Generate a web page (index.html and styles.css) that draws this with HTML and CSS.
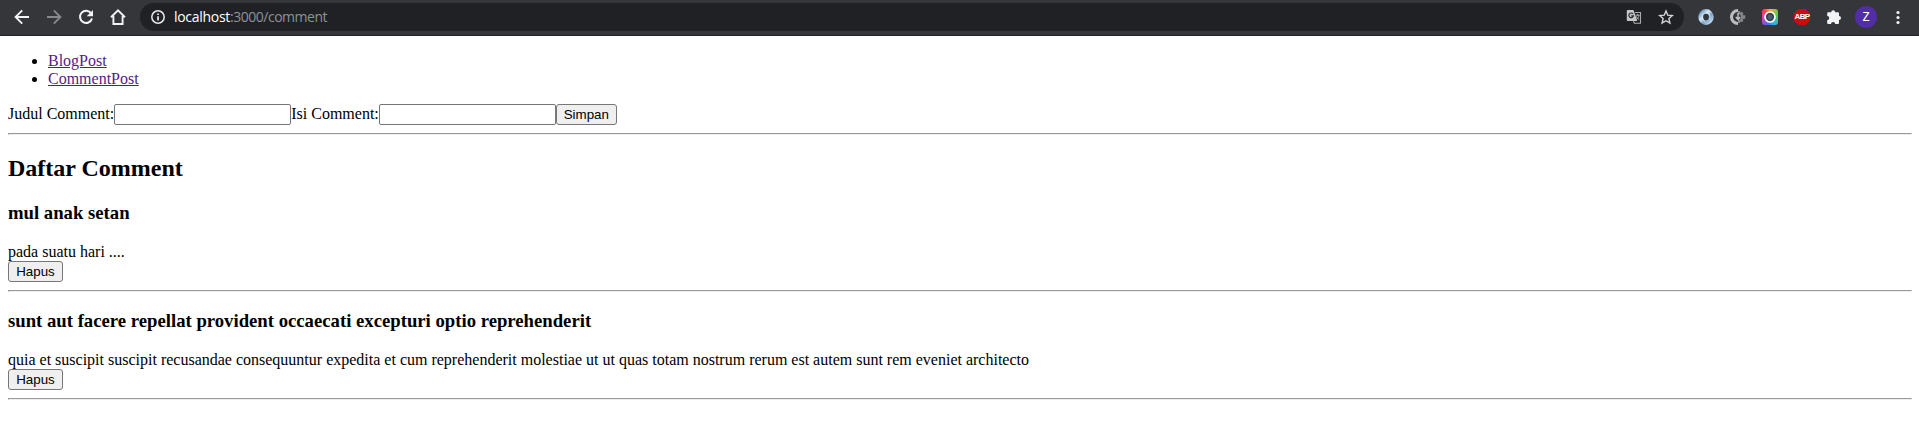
FILE: index.html
```html
<!DOCTYPE html>
<html lang="id">
<head>
<meta charset="utf-8">
<title>Comment</title>
<link rel="stylesheet" href="styles.css">
</head>
<body>
<header class="toolbar">
  <svg class="icon" viewBox="0 0 16 16"><path d="M15 8H2M8.2 1.3 1.6 8l6.6 6.7" fill="none" stroke="#f1f3f4" stroke-width="1.9"/></svg>
  <svg class="icon" viewBox="0 0 16 16"><path d="M1 8h13M7.8 1.3 14.4 8l-6.6 6.7" fill="none" stroke="#87898c" stroke-width="1.9"/></svg>
  <svg class="icon" viewBox="0 0 16 16"><path d="M13.2 4.4A6.1 6.1 0 1 0 14 9.5" fill="none" stroke="#f1f3f4" stroke-width="2"/><path d="M15 1v6.3H8.7z" fill="#f1f3f4"/></svg>
  <svg class="icon" viewBox="0 0 16 16"><path d="M1 8.3 8 1.4l7 6.9M3.4 7v8h9.2V7" fill="none" stroke="#f1f3f4" stroke-width="1.9"/></svg>
  <div class="omnibox">
    <svg class="info" viewBox="0 0 14 14"><circle cx="7" cy="7" r="6.2" fill="none" stroke="#e8eaed" stroke-width="1.5"/><path d="M6.2 6.2h1.7v4.4H6.2zM6.2 3.4h1.7V5H6.2z" fill="#e8eaed"/></svg>
    <span class="url"><span class="host">localhost</span><span class="path">:3000/comment</span></span>
    <svg class="icon" viewBox="0 0 16 16"><path d="M1.5 1h6l3.8 11H1.5a.7.7 0 0 1-.7-.7V1.7c0-.4.3-.7.7-.7z" fill="#c5c6c8"/><path d="M9 3.5h5.500v10.800H8.300L7.600 12" fill="none" stroke="#a8aaac" stroke-width="1.1"/><path d="M7 4.900a2.300 2.300 0 1 0 .4 2H5.200" fill="none" stroke="#292a2d" stroke-width="1.2"/><path d="M9.600 6.200h4M11.500 5v1.200M13 6.300c-.4 2-1.400 3.400-2.800 4.300M10.200 7.300c.6 1.400 1.500 2.500 3 3.300" fill="none" stroke="#c0c1c3" stroke-width=".9"/></svg>
    <svg class="icon" viewBox="0 0 16 16"><path d="m8 2 1.800 4.200 4.500.4-3.400 3 1 4.400L8 11.700 4.100 14l1-4.400-3.400-3 4.500-.4z" fill="none" stroke="#d6d7d9" stroke-width="1.4"/></svg>
  </div>
  <svg class="icon" viewBox="0 0 16 16"><defs><linearGradient id="ring" x1="0" y1="0" x2="1" y2="1"><stop offset="0" stop-color="#6795bd"/><stop offset=".35" stop-color="#d4e5f4"/><stop offset=".65" stop-color="#78a5cc"/><stop offset="1" stop-color="#c4daee"/></linearGradient></defs><ellipse cx="8" cy="8" rx="5.300" ry="5.600" fill="none" stroke="url(#ring)" stroke-width="4.800"/><path d="M5 4C3.500 7 4.500 11 7.500 13.500M8.500 2.400c3 2 4.300 5 3 8.600" fill="none" stroke="#dfedf8" stroke-width=".8"/></svg>
  <svg class="icon" viewBox="0 0 16 16"><path d="M8 0a8 8 0 0 0 0 16v-3a5 5 0 0 1 0-10z" fill="#bcbdbf"/><path d="M8 2h2l.4 1.700 1.400-1 1.700 1.700-1 1.500 2.800.6v3l-2.800.5 1 1.500-1.700 1.700-1.400-1L10 14H8v-3a3 3 0 0 0 0-6z" fill="#85878a"/><path d="M8 4v6M5.800 8 8 10.500 10.200 8" fill="none" stroke="#c5c6c8" stroke-width="1.400"/></svg>
  <span class="icon camera"><svg viewBox="0 0 16 16"><circle cx="8" cy="8" r="5" fill="#34434d" stroke="#fff" stroke-width="1.700"/><circle cx="8" cy="8" r="2.500" fill="#465e70"/></svg></span>
  <span class="icon adblock">ABP</span>
  <svg class="icon" viewBox="0 0 16 16"><path d="M5.200 3.200a2 2 0 0 1 4 0H12a1 1 0 0 1 1 1v2.900a2 2 0 0 1 0 4V14a1 1 0 0 1-1 1H9.200a2.100 2.100 0 0 0-4.200 0H2.200a1 1 0 0 1-1-1v-2.800a2.100 2.100 0 0 0 0-4.200V4.200a1 1 0 0 1 1-1z" fill="#f1f3f4"/></svg>
  <span class="avatar">Z</span>
  <svg class="icon" viewBox="0 0 16 16"><g fill="#f1f3f4"><circle cx="8" cy="3.500" r="1.600"/><circle cx="8" cy="8.500" r="1.600"/><circle cx="8" cy="13.500" r="1.600"/></g></svg>
</header>
<main class="page">
  <ul class="nav">
    <li><a href="#blog">BlogPost</a></li>
    <li><a href="#comment">CommentPost</a></li>
  </ul>
  <form class="entry">
    <label for="judul">Judul Comment:</label><input class="field" id="judul" type="text"><label for="isi">Isi Comment:</label><input class="field" id="isi" type="text"><button class="btn save" type="button">Simpan</button>
  </form>
  <hr>
  <h2>Daftar Comment</h2>
  <article>
    <h3>mul anak setan</h3>
    <div>pada suatu hari ....</div>
    <button class="btn remove" type="button">Hapus</button>
  </article>
  <hr>
  <article>
    <h3>sunt aut facere repellat provident occaecati excepturi optio reprehenderit</h3>
    <div>quia et suscipit suscipit recusandae consequuntur expedita et cum reprehenderit molestiae ut ut quas totam nostrum rerum est autem sunt rem eveniet architecto</div>
    <button class="btn remove" type="button">Hapus</button>
  </article>
  <hr>
</main>
</body>
</html>
```
FILE: styles.css
```css
body {
  margin: 0;
  background: #fff;
  color: #000;
  font: 16px/18px "Liberation Serif", serif;
}

.toolbar {
  display: flex;
  align-items: center;
  gap: 16px;
  box-sizing: border-box;
  height: 36px;
  padding: 0 13px 1px 14px;
  background: #35363a;
  border-bottom: 1px solid #222326;
}

.icon {
  flex: none;
  display: block;
  width: 16px;
  height: 16px;
}

.omnibox {
  flex: 1;
  display: flex;
  align-items: center;
  gap: 16px;
  box-sizing: border-box;
  height: 28px;
  margin: 0 -2px;
  padding: 0 10px 0 11px;
  border-radius: 14px;
  background: #202124;
}

.info {
  width: 14px;
  height: 14px;
  margin-right: -7px;
}

.url {
  flex: 1;
  font: 14px/20px "Open Sans", sans-serif;
  letter-spacing: -0.3px;
  white-space: nowrap;
}

.host { color: #fff; }
.path { color: #8f9195; letter-spacing: -0.48px; }

.camera {
  border-radius: 3px;
  background: conic-gradient(#f6b23c, #58c85a 20%, #21b6e9 42%, #5262e8 55%, #e93cbd 75%, #f23f4e 88%, #f6b23c);
}

.camera svg { display: block; }

/* Octagonal badge drawn with corner gradients */
.adblock {
  background:
    linear-gradient(135deg, transparent 3.3px, #c70d0d 3.4px) 0 0 / 8px 8px,
    linear-gradient(225deg, transparent 3.3px, #c70d0d 3.4px) 8px 0 / 8px 8px,
    linear-gradient(45deg, transparent 3.3px, #c70d0d 3.4px) 0 8px / 8px 8px,
    linear-gradient(315deg, transparent 3.3px, #c70d0d 3.4px) 8px 8px / 8px 8px;
  background-repeat: no-repeat;
  color: #fff;
  font: bold 8px/16px "Liberation Sans", sans-serif;
  letter-spacing: -0.6px;
  text-align: center;
}

.avatar {
  flex: none;
  width: 22px;
  height: 22px;
  margin: 0 -3px;
  border-radius: 50%;
  background: #512da8;
  color: #fff;
  font: 12px/22px Roboto, sans-serif;
  text-align: center;
}

.page { padding: 16px 7px 0 8px; }

.nav {
  margin: 0 0 16px;
  padding-left: 40px;
}

.nav a { color: #551a8b; }

.entry {
  display: flex;
  align-items: center;
  height: 21px;
}

.entry label { padding-bottom: 1px; }

.field {
  box-sizing: border-box;
  width: 177px;
  height: 21px;
  margin: 0;
  padding: 1px 2px;
  border: 1px solid #767676;
  border-radius: 2px;
}

.btn {
  display: block;
  box-sizing: border-box;
  height: 21px;
  margin: 0;
  padding: 0;
  border: 1px solid #767676;
  border-radius: 3px;
  background: #efefef;
  color: #000;
  font: 13.333px/17px "Liberation Sans", Arial, sans-serif;
}

.save { width: 61px; }
.remove { width: 55px; }

hr {
  margin: 8px 0;
}

h2 {
  margin: 19.92px 0;
  font-size: 24px;
  line-height: 27px;
}

h3 {
  margin: 18.72px 0;
  font-size: 18.72px;
  line-height: 22px;
}
```
